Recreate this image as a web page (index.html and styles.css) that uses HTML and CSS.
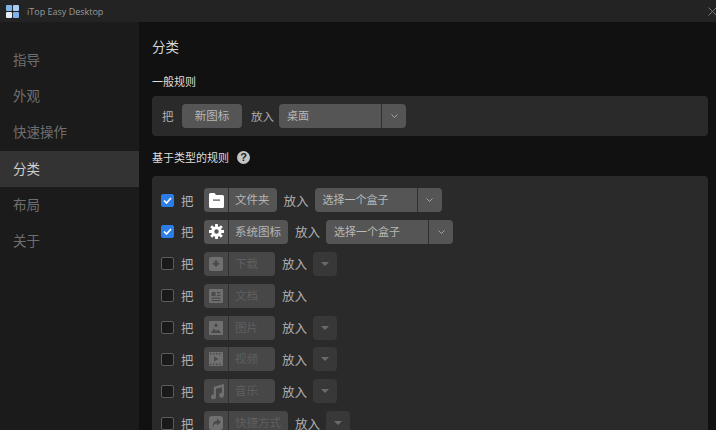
FILE: index.html
```html
<!DOCTYPE html>
<html>
<head>
	<meta charset="UTF-8">
	<title>iTop Easy Desktop</title>
	<link rel="stylesheet" href="styles.css">
</head>
<body>
	<div class="titlebar">
		<svg class="logo" width="13" height="13" viewBox="0 0 14 14">
			<rect x="0" y="0" width="6.500" height="6.500" rx="1" fill="#7fb4ea"/>
			<rect x="7.500" y="0" width="6.500" height="6.500" rx="1" fill="#a9cdf2"/>
			<rect x="0" y="7.500" width="6.500" height="6.500" rx="1" fill="#e4eef9"/>
			<rect x="7.500" y="7.500" width="6.500" height="6.500" rx="1" fill="#7fb4ea"/>
		</svg>
		<span class="app-name">iTop Easy Desktop</span>
		<svg class="close" width="9" height="9" viewBox="0 0 9 9"><path d="M.5.5l8 8M8.5.5l-8 8" stroke="#777" fill="none"/></svg>
	</div>
	<div class="window">
		<ul class="sidebar">
			<li>指导</li>
			<li>外观</li>
			<li>快速操作</li>
			<li class="active">分类</li>
			<li>布局</li>
			<li>关于</li>
		</ul>
		<div class="main">
			<h1>分类</h1>
			<h2>一般规则</h2>
			<div class="card card-general">
				<span class="word">把</span>
				<div class="btn btn-plain">新图标</div>
				<span class="word">放入</span>
				<div class="select"><span class="select-text">桌面</span><span class="select-arrow"><svg width="7" height="4" viewBox="0 0 7 4"><path d="M.5.5l3 3 3-3" stroke="#a5a5a5" fill="none"/></svg></span></div>
			</div>
			<h2 class="type-heading">基于类型的规则 <span class="help">?</span></h2>
			<div class="card card-types">
				<div class="row">
					<span class="check checked"><svg width="9" height="7" viewBox="0 0 9 7"><path d="M1 3.500l2.500 2.500 4.500-5" stroke="#fff" stroke-width="1.700" fill="none"/></svg></span>
					<span class="word">把</span>
					<div class="btn">
						<span class="btn-icon"><svg width="15" height="15" viewBox="0 0 15 15"><path d="M1.500 0h4l1.500 2h6.500a1.500 1.500 0 0 1 1.500 1.500v10a1.500 1.500 0 0 1-1.500 1.500h-12a1.500 1.500 0 0 1-1.500-1.500v-12a1.500 1.500 0 0 1 1.500-1.500z" fill="#fff"/><rect x="4" y="6.500" width="7" height="1.200" fill="#555"/></svg></span>
						<span class="btn-text">文件夹</span>
					</div>
					<span class="word">放入</span>
					<div class="select"><span class="select-text">选择一个盒子</span><span class="select-arrow"><svg width="7" height="4" viewBox="0 0 7 4"><path d="M.5.500l3 3 3-3" stroke="#a5a5a5" fill="none"/></svg></span></div>
				</div>
				<div class="row">
					<span class="check checked"><svg width="9" height="7" viewBox="0 0 9 7"><path d="M1 3.500l2.500 2.500 4.500-5" stroke="#fff" stroke-width="1.700" fill="none"/></svg></span>
					<span class="word">把</span>
					<div class="btn">
						<span class="btn-icon"><svg width="15" height="15" viewBox="0 0 14 14"><circle cx="7" cy="7" r="3.500" fill="none" stroke="#fff" stroke-width="2.800"/><path d="M7 0v3M7 11v3M0 7h3M11 7h3M2 2l2 2M10 10l2 2M12 2l-2 2M4 10l-2 2" stroke="#fff" stroke-width="2.600"/></svg></span>
						<span class="btn-text">系统图标</span>
					</div>
					<span class="word">放入</span>
					<div class="select"><span class="select-text">选择一个盒子</span><span class="select-arrow"><svg width="7" height="4" viewBox="0 0 7 4"><path d="M.5.500l3 3 3-3" stroke="#a5a5a5" fill="none"/></svg></span></div>
				</div>
				<div class="row">
					<span class="check"></span>
					<span class="word">把</span>
					<div class="btn off">
						<span class="btn-icon"><svg width="14" height="14" viewBox="0 0 14 14"><rect width="14" height="14" rx="2" fill="#707070"/><path d="M5.500 3.500h3v2.500h2.500l-4 4-4-4h2.500z" fill="#4a4a4a"/></svg></span>
						<span class="btn-text">下载</span>
					</div>
					<span class="word">放入</span>
					<div class="drop"><i></i></div>
				</div>
				<div class="row">
					<span class="check"></span>
					<span class="word">把</span>
					<div class="btn off">
						<span class="btn-icon"><svg width="14" height="14" viewBox="0 0 14 14"><rect width="14" height="14" rx="1" fill="#707070"/><path d="M2.500 3h4v4h-4zM8 3h3.500v1.300H8zM8 5.700h3.500V7H8zM2.500 8.500h9v1.200h-9zM2.500 11h9v1.200h-9z" fill="#4a4a4a"/></svg></span>
						<span class="btn-text">文档</span>
					</div>
					<span class="word">放入</span>
				</div>
				<div class="row">
					<span class="check"></span>
					<span class="word">把</span>
					<div class="btn off">
						<span class="btn-icon"><svg width="14" height="14" viewBox="0 0 14 14"><rect width="14" height="14" rx="1" fill="#707070"/><circle cx="7" cy="4.300" r="1.700" fill="#4a4a4a"/><path d="M1.500 12l3.500-4.500 2 2.500 2-1.500 3.500 3.500z" fill="#4a4a4a"/></svg></span>
						<span class="btn-text">图片</span>
					</div>
					<span class="word">放入</span>
					<div class="drop"><i></i></div>
				</div>
				<div class="row">
					<span class="check"></span>
					<span class="word">把</span>
					<div class="btn off">
						<span class="btn-icon"><svg width="14" height="14" viewBox="0 0 14 14"><rect width="14" height="14" rx="1" fill="#707070"/><path d="M1 1h1.500v1.500H1zM4 1h1.500v1.500H4zM7 1h1.500v1.500H7zM10 1h1.500v1.500H10zM1 11.500h1.500V13H1zM4 11.500h1.500V13H4zM7 11.500h1.500V13H7zM10 11.500h1.500V13H10zM5 4.500l4.500 2.500L5 9.500z" fill="#4a4a4a"/></svg></span>
						<span class="btn-text">视频</span>
					</div>
					<span class="word">放入</span>
					<div class="drop"><i></i></div>
				</div>
				<div class="row">
					<span class="check"></span>
					<span class="word">把</span>
					<div class="btn off">
						<span class="btn-icon"><svg width="15" height="15" viewBox="0 0 14 14"><path d="M4.500 2.500L14 0v10.500a2.300 2.300 0 1 1-2-2.200V3L6.500 4.500V12a2.300 2.300 0 1 1-2-2.200z" fill="#707070"/></svg></span>
						<span class="btn-text">音乐</span>
					</div>
					<span class="word">放入</span>
					<div class="drop"><i></i></div>
				</div>
				<div class="row">
					<span class="check"></span>
					<span class="word">把</span>
					<div class="btn off">
						<span class="btn-icon"><svg width="14" height="14" viewBox="0 0 14 14"><rect width="14" height="14" rx="3" fill="#707070"/><path d="M8 2.500l4 3.500-4 3.500V7.500C6 7.500 4.500 8.500 4 11c-.8-3.500 1-6 4-6.300z" fill="#4a4a4a"/></svg></span>
						<span class="btn-text">快捷方式</span>
					</div>
					<span class="word">放入</span>
					<div class="drop"><i></i></div>
				</div>
			</div>
		</div>
	</div>
</body>
</html>
```

FILE: styles.css
```css
html, body {
	margin: 0;
	height: 430px;
	overflow: hidden;
	background-color: #111111;
	font-family: "Noto Sans CJK SC", "Noto Sans", sans-serif;
	font-size: 12px;
	color: #b5b5b5;
}
.titlebar {
	display: flex;
	align-items: center;
	height: 22px;
	padding: 0 0 0 6px;
	background-color: #232323;
}
.logo {
	margin-right: 8px;
}
.app-name {
	flex: 1;
	font-family: "Open Sans", "Noto Sans", sans-serif;
	font-size: 9px;
	color: #9a9a9a;
}
.close {
	margin-right: -1px;
}
.window {
	display: flex;
	height: 408px;
}
.sidebar {
	width: 139px;
	margin: 0;
	padding: 19.500px 0 0;
	list-style: none;
	background-color: #1b1b1b;
	box-sizing: border-box;
}
.sidebar li {
	height: 36.400px;
	line-height: 35px;
	padding-left: 13px;
	font-size: 13.500px;
	color: #6f6f6f;
}
.sidebar li.active {
	background-color: #333333;
	color: #d0d0d0;
}
.main {
	flex: 1;
	padding: 0 8px 0 13px;
}
h1 {
	margin: 14px 0 0;
	font-size: 13.500px;
	font-weight: normal;
	line-height: 20px;
	color: #d8d8d8;
}
h2 {
	margin: 16px 0 0;
	height: 19px;
	font-size: 11px;
	font-weight: normal;
	line-height: 19px;
	color: #dedede;
}
.type-heading {
	display: flex;
	align-items: center;
	margin-top: 11px;
	height: 20px;
}
.help {
	display: inline-block;
	width: 13px;
	height: 13px;
	margin-left: 8px;
	border-radius: 50%;
	background-color: #c4c4c4;
	color: #222222;
	font-family: "Liberation Sans", sans-serif;
	font-size: 11px;
	font-weight: bold;
	line-height: 13px;
	text-align: center;
}
.card {
	background-color: #2a2a2a;
	border-radius: 4px;
}
.card-general {
	display: flex;
	align-items: center;
	height: 40px;
	margin-top: 5px;
	padding-left: 10px;
}
.card-general .word {
	font-size: 11.500px;
}
.card-general .btn {
	margin: 0 9px 0 8.500px;
}
.card-general .select {
	margin-left: 5px;
}
.card-types {
	margin-top: 9px;
	padding: 12px 0 0 9px;
}
.row {
	display: flex;
	align-items: center;
	height: 24px;
	margin-bottom: 7.900px;
}
.word {
	font-size: 12.500px;
	color: #b0b0b0;
}
.row .word {
	margin-left: 7px;
}
.row .word:nth-child(2) {
	margin-right: 10.500px;
}
.check {
	display: flex;
	align-items: center;
	justify-content: center;
	width: 11px;
	height: 11px;
	border: 1px solid #5c5c5c;
	border-radius: 2px;
	background-color: #1a1a1a;
}
.check.checked {
	background-color: #2b7de9;
	border-color: #2b7de9;
}
.btn {
	display: flex;
	height: 24px;
	border-radius: 4px;
	background-color: #555555;
	color: #b5b5b5;
	font-size: 11.500px;
	line-height: 23px;
}
.btn-plain {
	width: 60px;
	justify-content: center;
}
.btn-icon {
	display: flex;
	align-items: center;
	justify-content: center;
	width: 24px;
	border-right: 1px solid #2f2f2f;
}
.btn-text {
	padding: 0 7px 0 6px;
	white-space: nowrap;
}
.btn.off {
	background-color: #474747;
	color: #5f5f5f;
}
.btn.off .btn-text {
	min-width: 33px;
}
.select {
	display: flex;
	height: 24px;
	margin-left: 6px;
	border-radius: 4px;
	background-color: #555555;
	font-size: 11px;
	line-height: 23px;
	color: #b8b8b8;
}
.select-text {
	width: 94px;
	padding-left: 8px;
	border-right: 1px solid #2f2f2f;
}
.select-arrow {
	display: flex;
	align-items: center;
	justify-content: center;
	width: 24px;
}
.drop {
	display: flex;
	align-items: center;
	justify-content: center;
	width: 24px;
	height: 24px;
	margin-left: 6px;
	border-radius: 4px;
	background-color: #383838;
}
.drop i {
	width: 0;
	height: 0;
	border-style: solid;
	border-width: 4px 4px 0;
	border-color: #6a6a6a transparent transparent;
}
```
